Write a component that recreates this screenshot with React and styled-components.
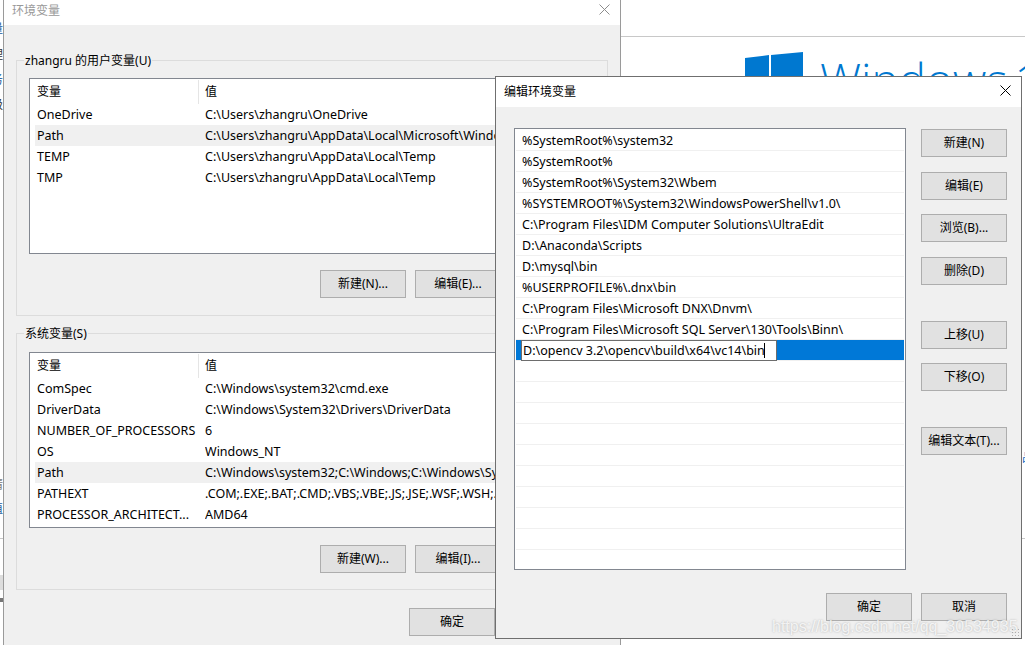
import React from 'react';
import styled, { createGlobalStyle } from 'styled-components';

const GlobalStyle = createGlobalStyle`
  html, body {
    margin: 0;
    padding: 0;
    background: #ffffff;
    overflow: hidden;
  }
  body {
    font-family: "Noto Sans", "Noto Sans CJK SC", sans-serif;
    font-size: 12px;
    color: #000000;
  }
`;

const Desktop = styled.div`
  position: relative;
  width: 1025px;
  height: 645px;
  overflow: hidden;
  background: #ffffff;
`;

const Rule = styled.div`
  position: absolute;
  left: ${(p) => p.$left}px;
  top: ${(p) => p.$top}px;
  right: 0;
  width: ${(p) => (p.$width ? `${p.$width}px` : 'auto')};
  height: 1px;
  background: #c8c8c8;
`;

const Fragment = styled.span`
  position: absolute;
  left: ${(p) => p.$left}px;
  top: ${(p) => p.$top}px;
  font-size: 12px;
  line-height: 14px;
  color: ${(p) => p.$color};
`;

const Scrap = styled.div`
  position: absolute;
  left: 0;
  top: ${(p) => p.$top}px;
  width: 3px;
  height: ${(p) => p.$height}px;
  background: ${(p) => p.$color};
`;

const Brand = styled.div`
  position: absolute;
  left: 745px;
  top: 52px;
  display: flex;
  align-items: flex-start;
  gap: 17px;
`;

const BrandName = styled.span`
  margin-top: -3px;
  font-family: "Open Sans", "Noto Sans", sans-serif;
  font-weight: 300;
  font-size: 46px;
  line-height: 60px;
  word-spacing: -5px;
  color: #0078d0;
  white-space: nowrap;
`;

const Window = styled.div`
  position: absolute;
  left: ${(p) => p.$left}px;
  top: ${(p) => p.$top}px;
  width: ${(p) => p.$width}px;
  height: ${(p) => p.$height}px;
  box-sizing: border-box;
  display: flex;
  flex-direction: column;
  border: 1px solid ${(p) => (p.$active ? '#6f6f6f' : '#9a9a9a')};
  background: #f0f0f0;
`;

const TitleBar = styled.div`
  flex: none;
  box-sizing: border-box;
  height: ${(p) => p.$height}px;
  display: flex;
  align-items: center;
  justify-content: space-between;
  padding: 0 ${(p) => p.$padRight}px ${(p) => p.$padBottom}px 8px;
  background: #ffffff;
  color: ${(p) => (p.$active ? '#000000' : '#999999')};
`;

const CloseIcon = ({ color }) => (
  <svg width="11" height="11" viewBox="0 0 11 11">
    <path d="M0.5 0.5 L10.5 10.5 M10.5 0.5 L0.5 10.5" stroke={color} strokeWidth="1" fill="none" />
  </svg>
);

const BackBody = styled.div`
  flex: 1;
  display: flex;
  flex-direction: column;
  padding: 35px 12px 0 12px;
`;

const Group = styled.div`
  position: relative;
  box-sizing: border-box;
  height: ${(p) => p.$height}px;
  margin-bottom: ${(p) => p.$mb}px;
  padding: ${(p) => p.$padTop}px 11px 0 12px;
  border: 1px solid #dcdcdc;
`;

const GroupLabel = styled.span`
  position: absolute;
  left: 7px;
  top: -8px;
  padding: 0 1px;
  line-height: 16px;
  background: #f0f0f0;
  white-space: nowrap;
`;

const VarList = styled.div`
  box-sizing: border-box;
  height: 176px;
  padding: 0 5px;
  overflow: hidden;
  background: #ffffff;
  border: 1px solid #828790;
`;

const VarHeader = styled.div`
  display: grid;
  grid-template-columns: 164px 1fr;
  height: 25px;
`;

const HeaderCell = styled.div`
  display: flex;
  align-items: center;
  box-sizing: border-box;
  padding-left: ${(p) => p.$pad}px;
  padding-bottom: 2px;
  height: 24px;
  margin-top: 1px;
  border-right: ${(p) => (p.$divider ? '1px solid #e5e5e5' : 'none')};
`;

const VarRow = styled.div`
  display: grid;
  grid-template-columns: 170px 1fr;
  height: 21px;
  align-items: center;
  background: ${(p) => (p.$selected ? '#f0f0f0' : 'transparent')};
`;

const Cell = styled.span`
  padding-left: ${(p) => p.$pad || 0}px;
  font-size: 12.5px;
  line-height: 20px;
  white-space: nowrap;
  overflow: hidden;
`;

const ButtonRow = styled.div`
  display: flex;
  justify-content: flex-end;
  gap: ${(p) => p.$gap}px;
  margin-top: ${(p) => p.$top}px;
  padding-right: ${(p) => p.$right}px;
`;

const Btn = styled.button`
  flex: none;
  box-sizing: border-box;
  width: 86px;
  height: 28px;
  margin-top: ${(p) => p.$mt || 0}px;
  padding: 0 0 3px;
  font: inherit;
  color: #000000;
  white-space: nowrap;
  background: #e1e1e1;
  border: 1px solid #adadad;
`;

const EditBody = styled.div`
  flex: 1;
  display: flex;
  flex-direction: column;
  padding: 21px 14px 0 18px;
`;

const EditTop = styled.div`
  display: flex;
  gap: 15px;
`;

const PathList = styled.div`
  box-sizing: border-box;
  width: 393px;
  height: 442px;
  padding: 1px 1px 0;
  overflow: hidden;
  background: #ffffff;
  border: 1px solid #828790;
`;

const PathRow = styled.div`
  position: relative;
  box-sizing: border-box;
  height: 21px;
  padding: 1px 0 0 6px;
  font-size: 12.5px;
  line-height: 19px;
  white-space: nowrap;
  border-bottom: 1px solid #f0f0f0;
  background: ${(p) => (p.$selected ? '#0078d7' : 'transparent')};
`;

const PathInput = styled.div`
  position: absolute;
  left: 5px;
  top: 0;
  box-sizing: border-box;
  width: 256px;
  height: 21px;
  padding-left: 1px;
  line-height: 19px;
  background: #ffffff;
  border: 1px solid #6d6d6d;
`;

const Caret = styled.span`
  position: absolute;
  left: 242px;
  top: 2px;
  width: 1px;
  height: 15px;
  background: #000000;
`;

const SideButtons = styled.div`
  display: flex;
  flex-direction: column;
  padding-top: 1px;
`;

const Watermark = styled.span`
  position: absolute;
  left: 772px;
  top: 616px;
  font-family: "Liberation Sans", sans-serif;
  font-size: 16px;
  line-height: 22px;
  color: rgba(255, 255, 255, 0.8);
  text-shadow: 0 0 2px rgba(120, 120, 120, 0.55);
  white-space: nowrap;
`;

const Grip = styled.div`
  position: absolute;
  right: 2px;
  bottom: 2px;
  width: 8px;
  height: 8px;
  background-image: radial-gradient(#b0b0b0 1px, transparent 1px);
  background-size: 3px 3px;
`;

const userVars = [
  ['OneDrive', 'C:\\Users\\zhangru\\OneDrive'],
  ['Path', 'C:\\Users\\zhangru\\AppData\\Local\\Microsoft\\WindowsApps;'],
  ['TEMP', 'C:\\Users\\zhangru\\AppData\\Local\\Temp'],
  ['TMP', 'C:\\Users\\zhangru\\AppData\\Local\\Temp'],
];

const systemVars = [
  ['ComSpec', 'C:\\Windows\\system32\\cmd.exe'],
  ['DriverData', 'C:\\Windows\\System32\\Drivers\\DriverData'],
  ['NUMBER_OF_PROCESSORS', '6'],
  ['OS', 'Windows_NT'],
  ['Path', 'C:\\Windows\\system32;C:\\Windows;C:\\Windows\\System32\\Wbem;'],
  ['PATHEXT', '.COM;.EXE;.BAT;.CMD;.VBS;.VBE;.JS;.JSE;.WSF;.WSH;.MSC'],
  ['PROCESSOR_ARCHITECT...', 'AMD64'],
];

const paths = [
  '%SystemRoot%\\system32',
  '%SystemRoot%',
  '%SystemRoot%\\System32\\Wbem',
  '%SYSTEMROOT%\\System32\\WindowsPowerShell\\v1.0\\',
  'C:\\Program Files\\IDM Computer Solutions\\UltraEdit',
  'D:\\Anaconda\\Scripts',
  'D:\\mysql\\bin',
  '%USERPROFILE%\\.dnx\\bin',
  'C:\\Program Files\\Microsoft DNX\\Dnvm\\',
  'C:\\Program Files\\Microsoft SQL Server\\130\\Tools\\Binn\\',
];

const sideButtons = [
  ['新建(N)', 0],
  ['编辑(E)', 15],
  ['浏览(B)...', 14],
  ['删除(D)', 15],
  ['上移(U)', 36],
  ['下移(O)', 14],
  ['编辑文本(T)...', 36],
];

const VariableGroup = ({ title, rows, selected, height, mb, padTop, btnTop, buttons }) => (
  <Group $height={height} $mb={mb} $padTop={padTop}>
    <GroupLabel>{title}</GroupLabel>
    <VarList>
      <VarHeader>
        <HeaderCell $pad={2} $divider>变量</HeaderCell>
        <HeaderCell $pad={6}>值</HeaderCell>
      </VarHeader>
      {rows.map(([name, value]) => (
        <VarRow key={name} $selected={name === selected}>
          <Cell $pad={2}>{name}</Cell>
          <Cell>{value}</Cell>
        </VarRow>
      ))}
    </VarList>
    <ButtonRow $gap={9} $top={btnTop} $right={0}>
      {buttons.map((label) => (
        <Btn key={label}>{label}</Btn>
      ))}
    </ButtonRow>
  </Group>
);

const App = () => (
  <Desktop>
    <GlobalStyle />

    <Rule $left={620} $top={36} />
    <Rule $left={1022} $top={538} />
    <Rule $left={0} $top={538} $width={3} />
    <Fragment $left={-9} $top={22} $color="#1a5a9c">量</Fragment>
    <Fragment $left={-9} $top={48} $color="#333333">理</Fragment>
    <Fragment $left={-9} $top={73} $color="#1a5a9c">务</Fragment>
    <Fragment $left={-9} $top={98} $color="#333333">级</Fragment>
    <Fragment $left={-9} $top={478} $color="#777777">请</Fragment>
    <Fragment $left={-9} $top={502} $color="#1a5a9c">值</Fragment>
    <Fragment $left={1022} $top={451} $color="#0f6cc4">品</Fragment>
    <Scrap $top={575} $height={15} $color="#dddddd" />
    <Scrap $top={598} $height={4} $color="#777777" />

    <Brand>
      <svg width="58" height="60" viewBox="0 0 58 60">
        <path d="M0 6 L24 3 L24 24 L0 24 Z M26 3 L58 0 L58 24 L26 24 Z M0 26 L24 26 L24 46 L0 43 Z M26 26 L58 26 L58 50 L26 47 Z" fill="#0078d0" />
      </svg>
      <BrandName>Windows 10</BrandName>
    </Brand>

    <Window $left={3} $top={-1} $width={618} $height={700}>
      <TitleBar $height={25} $padRight={10} $padBottom={6}>
        环境变量
        <CloseIcon color="#8c8c8c" />
      </TitleBar>
      <BackBody>
        <VariableGroup
          title="zhangru 的用户变量(U)"
          rows={userVars}
          selected="Path"
          height={256}
          mb={17}
          padTop={17}
          btnTop={16}
          buttons={['新建(N)...', '编辑(E)...', '删除(D)']}
        />
        <VariableGroup
          title="系统变量(S)"
          rows={systemVars}
          selected="Path"
          height={257}
          mb={0}
          padTop={18}
          btnTop={17}
          buttons={['新建(W)...', '编辑(I)...', '删除(L)']}
        />
        <ButtonRow $gap={9} $top={18} $right={18}>
          <Btn>确定</Btn>
          <Btn>取消</Btn>
        </ButtonRow>
      </BackBody>
    </Window>

    <Window $active $left={495} $top={76} $width={527} $height={563}>
      <TitleBar $active $height={30} $padRight={10} $padBottom={3}>
        编辑环境变量
        <CloseIcon color="#000000" />
      </TitleBar>
      <EditBody>
        <EditTop>
          <PathList>
            {paths.map((path) => (
              <PathRow key={path}>{path}</PathRow>
            ))}
            <PathRow $selected>
              <PathInput>
                D:\opencv 3.2\opencv\build\x64\vc14\bin
                <Caret />
              </PathInput>
            </PathRow>
            {Array.from({ length: 10 }, (_, i) => (
              <PathRow key={i} />
            ))}
          </PathList>
          <SideButtons>
            {sideButtons.map(([label, mt]) => (
              <Btn key={label} $mt={mt}>{label}</Btn>
            ))}
          </SideButtons>
        </EditTop>
        <ButtonRow $gap={9} $top={23} $right={0}>
          <Btn>确定</Btn>
          <Btn>取消</Btn>
        </ButtonRow>
      </EditBody>
      <Grip />
    </Window>

    <Watermark>https://blog.csdn.net/qq_30534935</Watermark>
  </Desktop>
);

export default App;
